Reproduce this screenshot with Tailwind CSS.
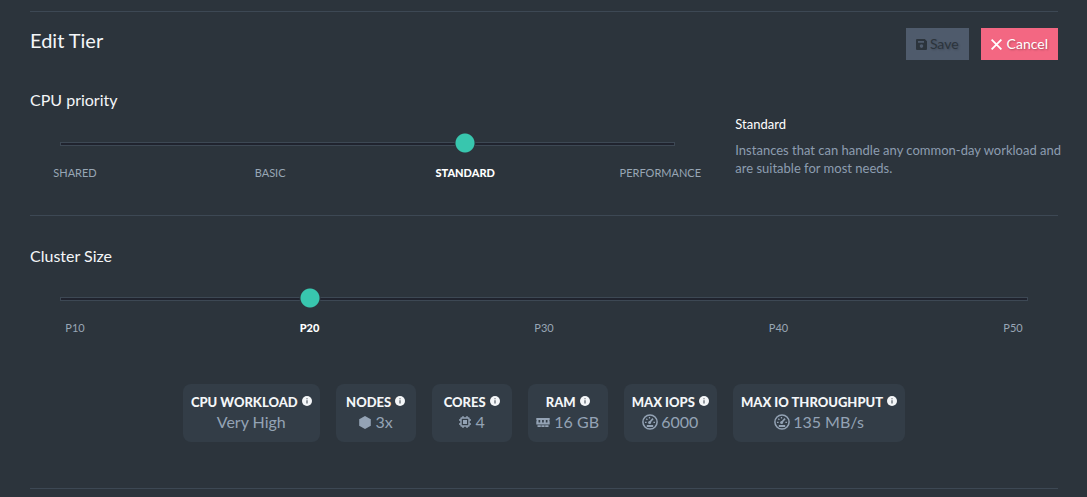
<!DOCTYPE html>
<html lang="en">
<head>
<meta charset="utf-8">
<meta name="viewport" content="width=device-width, initial-scale=1">
<title>Edit Tier</title>
<script src="https://cdn.jsdelivr.net/npm/@tailwindcss/browser@4"></script>
</head>
<body class="min-h-screen bg-[#2c343c] font-['Lato',sans-serif] text-[#f4f6f8]">
<svg class="hidden" aria-hidden="true">
  <symbol id="info" viewBox="0 0 10 10"><circle cx="5" cy="5" r="5" fill="currentColor"/><path d="M4.5 4.2h1v3.4h-1zM4.5 2.2h1v1h-1z" fill="#333d47"/></symbol>
  <symbol id="gauge" viewBox="0 0 16 16"><circle cx="8" cy="8" r="7.1" fill="none" stroke="currentColor" stroke-width="1.5"/><path d="M4.800 12h6.400" stroke="currentColor" stroke-width="2"/><path d="M7.600 8.500L11 4.600" stroke="currentColor" stroke-width="1.6"/><circle cx="7.600" cy="8.400" r="1.5" fill="currentColor"/><path d="M3 8.300h1.600M4.300 4.800l1.100 1.100M7.500 3v1.600M11.400 8.300H13" stroke="currentColor" stroke-width="1.3"/></symbol>
</svg>
<main class="pt-[11px] pr-[29px] pl-[30px]">
  <section class="border-y border-[#3d4854] pt-4 pb-[34px]">
    <header class="flex items-start justify-between">
      <h1 class="text-xl leading-6">Edit Tier</h1>
      <div class="flex gap-3 text-sm">
        <button type="button" disabled class="flex h-8 items-center gap-[3px] bg-[#4f5b6c] px-[10px] text-[#2c343c] text-shadow-[1px_1px_2px_rgba(0,0,0,0.2)]">
          <svg class="size-[11px]" viewBox="0 0 11 11" aria-hidden="true"><path fill="currentColor" fill-rule="evenodd" d="M1 0h7.800L11 2.200V10a1 1 0 0 1-1 1H1a1 1 0 0 1-1-1V1a1 1 0 0 1 1-1zM2 2v1.800h6V2zM5.500 5.300a1.800 1.800 0 1 0 0 3.600a1.800 1.800 0 0 0 0-3.600z"/></svg>Save</button>
        <button type="button" class="flex h-8 items-center gap-[5px] bg-[#f36782] px-[10px] text-white text-shadow-[1px_1px_2px_rgba(0,0,0,0.3)]">
          <svg class="size-[11px]" viewBox="0 0 11 11" aria-hidden="true"><path d="M.6.600l9.800 9.800M10.400.600L.6 10.400" stroke="currentColor" stroke-width="1.800"/></svg>Cancel</button>
      </div>
    </header>
    <div class="mt-[29px] grid grid-cols-3 gap-[30px]">
      <div class="col-span-2">
        <label for="cpu" class="block text-base leading-[22px]">CPU priority</label>
        <div class="mt-[22px] px-[30px]">
          <input id="cpu" type="range" min="0" max="3" value="2" class="block h-[21px] w-full appearance-none bg-transparent [&::-webkit-slider-runnable-track]:h-1 [&::-webkit-slider-runnable-track]:border [&::-webkit-slider-runnable-track]:border-[#3d4854] [&::-webkit-slider-runnable-track]:bg-[#20232e] [&::-webkit-slider-thumb]:-mt-[11px] [&::-webkit-slider-thumb]:h-[22px] [&::-webkit-slider-thumb]:w-[30px] [&::-webkit-slider-thumb]:appearance-none [&::-webkit-slider-thumb]:bg-[radial-gradient(circle,#38c6ae_9px,#2c343c_10px,#2c343c_10px,transparent_11px)]">
          <div class="mt-[11px] flex justify-between text-[11px] leading-4 text-[#98a6b5]">
            <span class="flex w-[30px] justify-center whitespace-nowrap">SHARED</span>
            <span class="flex w-[30px] justify-center whitespace-nowrap">BASIC</span>
            <b class="flex w-[30px] justify-center font-black whitespace-nowrap text-white">STANDARD</b>
            <span class="flex w-[30px] justify-center whitespace-nowrap">PERFORMANCE</span>
          </div>
        </div>
      </div>
      <div class="-mr-3 pt-[26px] text-[13px] leading-[18px]">
        <h2 class="text-white">Standard</h2>
        <p class="mt-2 text-[#8d9db0]">Instances that can handle any common-day workload and are suitable for most needs.</p>
      </div>
    </div>
  </section>
  <section class="border-b border-[#3d4854] pt-[29px] pb-[46px]">
    <label for="size" class="block text-base leading-[22px]">Cluster Size</label>
    <div class="mt-[21px] px-[30px]">
      <input id="size" type="range" min="0" max="4" value="1" class="block h-[21px] w-full appearance-none bg-transparent [&::-webkit-slider-runnable-track]:h-1 [&::-webkit-slider-runnable-track]:border [&::-webkit-slider-runnable-track]:border-[#3d4854] [&::-webkit-slider-runnable-track]:bg-[#20232e] [&::-webkit-slider-thumb]:-mt-[11px] [&::-webkit-slider-thumb]:h-[22px] [&::-webkit-slider-thumb]:w-[30px] [&::-webkit-slider-thumb]:appearance-none [&::-webkit-slider-thumb]:bg-[radial-gradient(circle,#38c6ae_9px,#2c343c_10px,#2c343c_10px,transparent_11px)]">
      <div class="mt-[11px] flex justify-between text-[11px] leading-4 text-[#98a6b5]">
        <span class="w-[30px] text-center">P10</span>
        <b class="w-[30px] text-center font-black text-white">P20</b>
        <span class="w-[30px] text-center">P30</span>
        <span class="w-[30px] text-center">P40</span>
        <span class="w-[30px] text-center">P50</span>
      </div>
    </div>
    <dl class="mt-12 flex flex-wrap justify-center gap-4 text-center">
      <div class="min-w-20 rounded-lg bg-[#333d47] px-2 pt-[10px] pb-2">
        <dt class="flex items-center justify-center gap-1 text-[13px] leading-4 font-black">CPU WORKLOAD<svg class="mb-0.5 size-[10px]"><use href="#info"/></svg></dt>
        <dd class="text-base leading-6 text-[#94a3b5]">Very High</dd>
      </div>
      <div class="min-w-20 rounded-lg bg-[#333d47] px-2 pt-[10px] pb-2">
        <dt class="flex items-center justify-center gap-1 text-[13px] leading-4 font-black">NODES<svg class="mb-0.5 size-[10px]"><use href="#info"/></svg></dt>
        <dd class="flex items-center justify-center gap-[5px] text-base leading-6 text-[#94a3b5]"><svg class="h-[13px] w-3" viewBox="0 0 12 13" aria-hidden="true"><path fill="currentColor" d="M6 0l5.800 3.300v6.400L6 13L.2 9.700V3.300z"/></svg>3x</dd>
      </div>
      <div class="min-w-20 rounded-lg bg-[#333d47] px-2 pt-[10px] pb-2">
        <dt class="flex items-center justify-center gap-1 text-[13px] leading-4 font-black">CORES<svg class="mb-0.5 size-[10px]"><use href="#info"/></svg></dt>
        <dd class="flex items-center justify-center gap-[5px] text-base leading-6 text-[#94a3b5]"><svg class="size-3" viewBox="0 0 12 12" aria-hidden="true"><rect x="2" y="2" width="8" height="8" rx=".5" fill="none" stroke="currentColor" stroke-width="1.400"/><path fill="currentColor" d="M4 4h4v4H4z"/><path d="M4 0v2M8 0v2M4 10v2M8 10v2M0 4h2M0 8h2M10 4h2M10 8h2" stroke="currentColor" stroke-width="1.300"/></svg>4</dd>
      </div>
      <div class="min-w-20 rounded-lg bg-[#333d47] px-2 pt-[10px] pb-2">
        <dt class="flex items-center justify-center gap-1 text-[13px] leading-4 font-black">RAM<svg class="mb-0.5 size-[10px]"><use href="#info"/></svg></dt>
        <dd class="flex items-center justify-center gap-1 text-base leading-6 text-[#94a3b5]"><svg class="h-[10px] w-[14px]" viewBox="0 -1 14 10" aria-hidden="true"><path fill="currentColor" fill-rule="evenodd" d="M.3 0h13.400v2q-1 .8 0 1.600V6.500H.3V3.600q1-.8 0-1.600zM2.500 2v2.500h1.700V2zM6.100 2v2.500h1.700V2zM9.800 2v2.500h1.700V2z"/><path fill="currentColor" d="M1.500 7.300h3.300v1.700H1.500zM5.400 7.300h3.200v1.700H5.400zM9.200 7.300h3.300v1.700H9.200z"/></svg>16 GB</dd>
      </div>
      <div class="min-w-20 rounded-lg bg-[#333d47] px-2 pt-[10px] pb-2">
        <dt class="flex items-center justify-center gap-1 text-[13px] leading-4 font-black">MAX IOPS<svg class="mb-0.5 size-[10px]"><use href="#info"/></svg></dt>
        <dd class="flex items-center justify-center gap-[3px] text-base leading-6 text-[#94a3b5]"><svg class="size-4"><use href="#gauge"/></svg>6000</dd>
      </div>
      <div class="min-w-20 rounded-lg bg-[#333d47] px-2 pt-[10px] pb-2">
        <dt class="flex items-center justify-center gap-1 text-[13px] leading-4 font-black">MAX IO THROUGHPUT<svg class="mb-0.5 size-[10px]"><use href="#info"/></svg></dt>
        <dd class="flex items-center justify-center gap-[3px] text-base leading-6 text-[#94a3b5]"><svg class="size-4"><use href="#gauge"/></svg>135 MB/s</dd>
      </div>
    </dl>
  </section>
</main>
</body>
</html>
